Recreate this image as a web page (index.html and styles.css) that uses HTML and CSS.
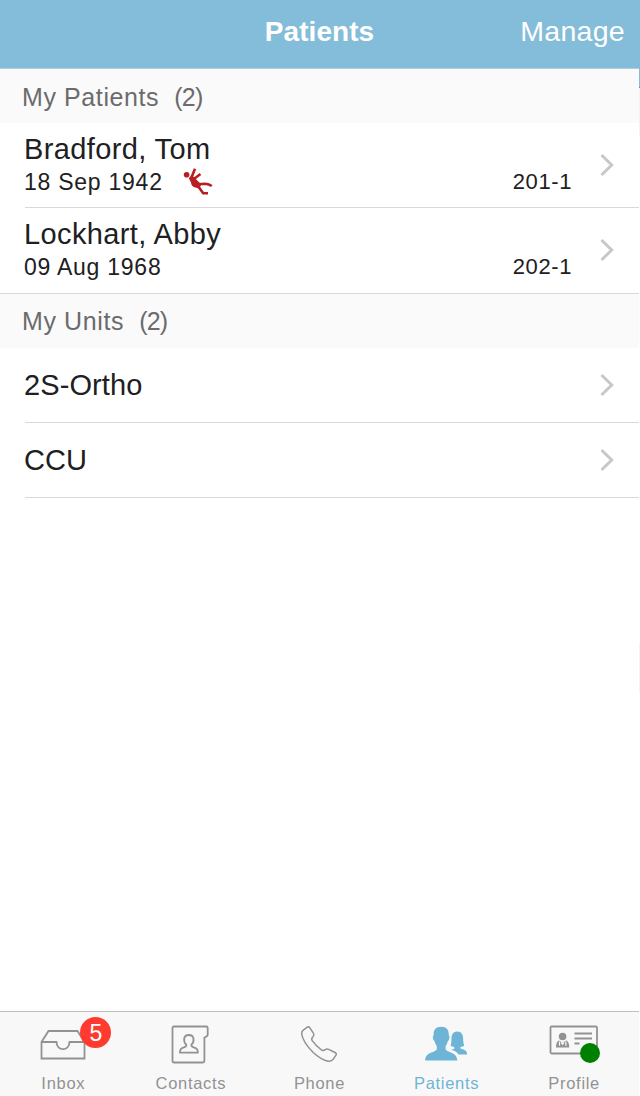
FILE: index.html
```html
<!DOCTYPE html>
<html lang="en">
<head>
  <meta charset="utf-8">
  <title>Patients</title>
  <link rel="stylesheet" href="styles.css">
</head>
<body>
  <div class="app">
    <header class="navbar">
      <h1>Patients</h1>
      <a class="manage">Manage</a>
    </header>

    <main>
      <h2 class="section">My Patients&nbsp; <span class="count">(2)</span></h2>
      <ul class="list patients">
        <li>
          <div class="info">
            <div class="name">Bradford, Tom</div>
            <div class="details">
              <span class="dob">18 Sep 1942</span>
              <!-- fall risk -->
              <svg class="fall" width="30" height="28" viewBox="0 0 30 28">
                <circle cx="3.6" cy="6.8" r="2.8"/>
                <path class="limb" d="M12 0.8L8.9 8.5M17.5 6L11.5 10.5M15 16.2L22.3 15.7Q26 16 28.8 18M15 18L20.2 25.3H25"/>
                <path d="M5.8 10.2L8.5 7L12.5 10.7L18.5 16.5L16 20.5L12.2 19.6Q8.3 18.5 8 14.6Z"/>
              </svg>
              <span class="room">201-1</span>
            </div>
          </div>
          <svg class="chevron" width="14" height="24" viewBox="0 0 14 24"><path d="M1.5 2L11.7 12L1.5 22"/></svg>
        </li>
        <li>
          <div class="info">
            <div class="name">Lockhart, Abby</div>
            <div class="details">
              <span class="dob">09 Aug 1968</span>
              <span class="room">202-1</span>
            </div>
          </div>
          <svg class="chevron" width="14" height="24" viewBox="0 0 14 24"><path d="M1.5 2L11.7 12L1.5 22"/></svg>
        </li>
      </ul>

      <h2 class="section units-title">My Units&nbsp; <span class="count">(2)</span></h2>
      <ul class="list units">
        <li>
          <div class="name">2S-Ortho</div>
          <svg class="chevron" width="14" height="24" viewBox="0 0 14 24"><path d="M1.5 2L11.7 12L1.5 22"/></svg>
        </li>
        <li>
          <div class="name">CCU</div>
          <svg class="chevron" width="14" height="24" viewBox="0 0 14 24"><path d="M1.5 2L11.7 12L1.5 22"/></svg>
        </li>
      </ul>
    </main>

    <nav class="tabbar">
      <a class="tab inbox">
        <span class="icon">
          <svg width="46" height="40" viewBox="0 0 46 40">
            <path d="M1.5 17L8.5 6H37.5L44.5 17V33.5H1.5ZM1.5 17H16.5C16.5 26.5 29.5 26.5 29.5 17H44.5"/>
          </svg>
          <span class="badge">5</span>
        </span>
        <span class="label">Inbox</span>
      </a>
      <a class="tab contacts">
        <span class="icon">
          <svg width="40" height="40" viewBox="0 0 40 40">
            <path d="M3 1.5H35.2Q36.7 1.5 36.7 3V9.5Q36.7 11.3 33.4 12.6V36Q33.4 37.5 31.9 37.5H3Q1.5 37.5 1.5 36V3Q1.5 1.5 3 1.5Z"/>
            <path d="M9 27.7H26.8Q27 23.4 23.3 22.6Q20 21.8 20.4 19.7Q23 17.5 22.5 13.5Q21.8 10 17.8 10Q13.8 10 13.2 13.5Q12.6 17.5 15.3 19.7Q15.7 21.8 12.4 22.6Q8.8 23.4 9 27.7Z"/>
          </svg>
        </span>
        <span class="label">Contacts</span>
      </a>
      <a class="tab phone">
        <span class="icon">
          <svg width="38" height="40" viewBox="0 0 38 40">
            <path class="thin" d="M3.2 5.2L7.2 2.2Q8.8 1.3 9.9 2.8L13.5 8.4Q14.5 10.1 13.1 11.6Q11 13.7 12 15.4Q16.3 21.5 22 25.3Q23.6 26 25.2 24.7Q26.8 23.6 28.7 24.4L35 27.5Q37 28.6 36 30.2L33.3 34.2Q31.7 36.6 28.2 36.2Q21.5 35.1 13.2 27.5Q2.9 17.2 1.7 9Q1.6 6.5 3.2 5.2Z"/>
          </svg>
        </span>
        <span class="label">Phone</span>
      </a>
      <a class="tab active">
        <span class="icon">
          <svg width="44" height="40" viewBox="0 0 44 40">
            <path d="M32.3 6.5C36.5 6.5 38 9.5 38.1 13C38.2 16.5 38.3 18.5 39.3 20.8Q38 21.9 35.4 22V23.6C39 24.8 42 25.5 42.2 29.5H33.5C32 26.8 29.5 25.8 26 24.8Q29 24.6 29.3 23.6V22Q27 21.9 25.6 20.8C26.4 18.5 26.4 16.5 26.5 13C26.6 9.5 28.2 6.5 32.3 6.5Z"/>
            <path d="M16.2 1.8C21.5 1.8 24 4.6 23.8 10.5C25.2 11 24.3 15.5 22.8 16C22.3 18.5 21.6 19.8 20.6 21V24.3C22.5 28 32 26.8 32.3 35.6H0.2C0.5 26.8 9.9 28 11.8 24.3V21C10.8 19.8 10.1 18.5 9.6 16C8.1 15.5 7.2 11 8.6 10.5C8.4 4.6 10.9 1.8 16.2 1.8Z"/>
          </svg>
        </span>
        <span class="label">Patients</span>
      </a>
      <a class="tab">
        <span class="icon">
          <svg width="50" height="40" viewBox="0 0 50 40">
            <rect x="1.5" y="1.5" width="46.5" height="27" rx="1.2"/>
            <path d="M25.5 8.5H43M25.5 13.5H43M25.5 18.5H30.5"/>
            <g class="doctor">
              <circle cx="13.6" cy="11.5" r="3.8"/>
              <path d="M10 15.5Q7 16.5 7 22.4H20.2Q20.2 16.5 17.2 15.5L13.6 18Z"/>
              <path class="coat" d="M10.5 16.5V20.8M16.9 16.5V20.8M12.2 17.5L13.6 19.2L15 17.5"/>
            </g>
          </svg>
          <span class="status"></span>
        </span>
        <span class="label">Profile</span>
      </a>
    </nav>
  </div>
  <div class="edge"></div>
</body>
</html>
```
FILE: styles.css
```css
* {
  box-sizing: border-box;
}

body {
  display: flex;
  height: 1096px;
  margin: 0;
  background: #fff;
  color: #202022;
  font-family: "Liberation Sans", Arial, sans-serif;
  overflow: hidden;
}

.app {
  display: flex;
  flex-direction: column;
  width: 639px;
}

.edge {
  width: 1px;
  background: linear-gradient(#84bdda 0 87px, #5f8ea6 87px 88px, #f3f3f3 88px 137px, #fff 137px 643px, #f3f3f3 643px 692px, #fff 692px);
}

.navbar {
  display: grid;
  grid-template-columns: 1fr auto 1fr;
  align-items: center;
  height: 69px;
  padding: 0 14px 5px;
  background: #84bdd9;
  border-bottom: 1px solid #b5cdd9;
  color: #fff;
}

.navbar h1 {
  grid-column: 2;
  margin: 0;
  font-size: 28px;
  letter-spacing: 0.05px;
}

.manage {
  justify-self: end;
  font-size: 28.5px;
  letter-spacing: 0.3px;
}

main {
  flex: 1;
}

.section {
  height: 54px;
  margin: 0;
  padding-left: 22px;
  background: #fafafa;
  color: #6b6b6d;
  font-size: 25px;
  font-weight: normal;
  letter-spacing: 0.6px;
  line-height: 56px;
}

.count {
  letter-spacing: -0.8px;
}

.units-title {
  line-height: 55px;
}

.list {
  margin: 0;
  padding: 0;
  list-style: none;
}

.list li {
  display: flex;
  align-items: center;
  justify-content: space-between;
  margin-left: 25px;
  padding-right: 25px;
  border-bottom: 1px solid #d9d9db;
}

.patients li {
  height: 85px;
}

.patients li:last-child {
  height: 86px;
  margin-left: 0;
  padding-bottom: 1px;
  padding-left: 25px;
}

.units li {
  height: 75px;
}

.name {
  margin-left: -1px;
  font-size: 29px;
  letter-spacing: 0.38px;
  line-height: 33px;
}

.units .name {
  letter-spacing: 0.1px;
}

.info {
  width: 547px;
}

.details {
  display: flex;
  align-items: center;
  height: 32px;
}

.dob {
  width: 159px;
  margin-left: -1px;
  padding-top: 2px;
  font-size: 23px;
  letter-spacing: 0.75px;
}

.fall {
  fill: #b81e22;
}

.limb {
  fill: none;
  stroke: #b81e22;
  stroke-width: 2.6;
}

.room {
  margin-left: auto;
  font-size: 22px;
  letter-spacing: 0.6px;
}

.chevron {
  fill: none;
  stroke: #c7c7cc;
  stroke-width: 3;
}

.tabbar {
  display: flex;
  height: 85px;
  padding-right: 1px;
  background: #f8f8f8;
  border-top: 1px solid #bfbfbf;
  color: #929292;
}

.tab {
  display: flex;
  flex-direction: column;
  align-items: center;
  width: 20%;
  padding-top: 13px;
}

.inbox {
  padding-right: 1px;
}

.contacts {
  padding-right: 1px;
}

.phone {
  padding-left: 1px;
}

.icon {
  position: relative;
  height: 49px;
}

.icon svg {
  display: block;
  fill: none;
  stroke: #929292;
  stroke-width: 1.8;
}

.icon .thin {
  stroke-width: 1.5;
}

.active {
  color: #6db4d7;
}

.active .icon svg {
  fill: #6db4d7;
  stroke: none;
}

.icon .doctor {
  fill: #929292;
  stroke: none;
}

.icon .coat {
  fill: none;
  stroke: #f8f8f8;
  stroke-width: 1.2;
}

.label {
  font-size: 16.5px;
  letter-spacing: 0.7px;
  line-height: 19px;
}

.badge {
  position: absolute;
  top: -8px;
  left: 40px;
  width: 31px;
  height: 31px;
  border-radius: 50%;
  background: #ff3b30;
  color: #fff;
  font-size: 23px;
  line-height: 32px;
  text-align: center;
}

.status {
  position: absolute;
  top: 18px;
  left: 31px;
  width: 20px;
  height: 20px;
  border-radius: 50%;
  background: #008000;
}
```
